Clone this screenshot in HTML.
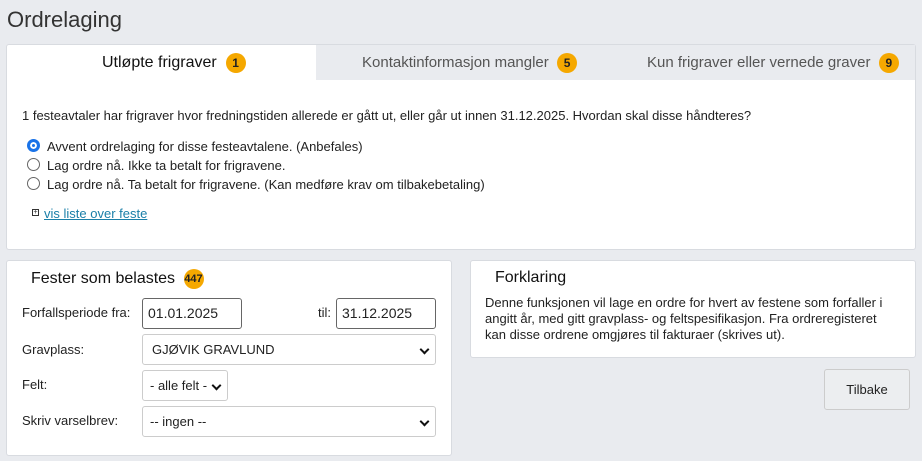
<!DOCTYPE html>
<html><head><meta charset="utf-8"><style>
body{margin:0;width:922px;height:461px;background:#e9ebef;font-family:"Liberation Sans",Arial,sans-serif;color:#222;position:relative;overflow:hidden}
.a{position:absolute;white-space:nowrap}
.panel{position:absolute;background:#fff;border:1px solid #d8dbe0;border-radius:3px}
.badge{display:inline-block;background:#f5a800;border-radius:50%;width:20px;height:20px;text-align:center;line-height:20px;font-size:12px;font-weight:bold;color:#222;vertical-align:middle}
.in{position:absolute;background:#fff;border:1px solid #666;border-radius:3px;font-size:14px;line-height:29px;padding-left:5px;box-sizing:border-box;height:31px}
.sel{position:absolute;background:#fff;border:1px solid #ccc;border-radius:3px;font-size:14px;line-height:29px;padding-left:8px;box-sizing:border-box;height:31px}
.chev{position:absolute;right:7px;top:11px;width:5px;height:5px;border-right:2px solid #111;border-bottom:2px solid #111;transform:rotate(45deg)}
.r{position:absolute;width:11px;height:11px;border:1px solid #666;border-radius:50%;background:#fff}
</style></head><body>
<div class="a" style="left:7px;top:7px;font-size:22px;color:#333">Ordrelaging</div>
<div class="panel" style="left:6px;top:44px;width:908px;height:204px"></div>
<div class="a" style="left:316px;top:45px;width:599px;height:35px;background:#e9ebef"></div>
<div class="a" style="left:102px;top:53px;font-size:16px;color:#111">Utløpte frigraver &nbsp;<span class="badge">1</span></div>
<div class="a" style="left:362px;top:53px;font-size:15px;color:#555">Kontaktinformasjon mangler &nbsp;<span class="badge">5</span></div>
<div class="a" style="left:647px;top:53px;font-size:15px;color:#555">Kun frigraver eller vernede graver &nbsp;<span class="badge">9</span></div>
<div class="a" style="left:22px;top:108px;font-size:13px">1 festeavtaler har frigraver hvor fredningstiden allerede er gått ut, eller går ut innen 31.12.2025. Hvordan skal disse håndteres?</div>
<div class="r" style="left:27px;top:139px;border:3px solid #1a73e8;width:7px;height:7px;box-shadow:inset 0 0 0 2px #fff;background:#1a73e8"></div>
<div class="r" style="left:27px;top:158px"></div>
<div class="r" style="left:27px;top:177px"></div>
<div class="a" style="left:47px;top:139px;font-size:13px">Avvent ordrelaging for disse festeavtalene. (Anbefales)</div>
<div class="a" style="left:47px;top:158px;font-size:13px">Lag ordre nå. Ikke ta betalt for frigravene.</div>
<div class="a" style="left:47px;top:177px;font-size:13px">Lag ordre nå. Ta betalt for frigravene. (Kan medføre krav om tilbakebetaling)</div>
<div class="a" style="left:32px;top:209px;width:5px;height:5px;border:1px solid #333;font-size:7px;line-height:5px;text-align:center">+</div>
<div class="a" style="left:44px;top:206px;font-size:13px;color:#1a7fa8;text-decoration:underline">vis liste over feste</div>

<div class="panel" style="left:6px;top:260px;width:444px;height:194px"></div>
<div class="a" style="left:31px;top:269px;font-size:16px;color:#111">Fester som belastes <span class="badge" style="font-size:11px;margin-left:4px">447</span></div>
<div class="a" style="left:22px;top:305px;font-size:13px">Forfallsperiode fra:</div>
<div class="in" style="left:142px;top:298px;width:100px">01.01.2025</div>
<div class="a" style="left:318px;top:305px;font-size:13px">til:</div>
<div class="in" style="left:336px;top:298px;width:100px">31.12.2025</div>
<div class="a" style="left:22px;top:342px;font-size:13px">Gravplass:</div>
<div class="sel" style="left:142px;top:334px;width:294px;font-size:13px;padding-left:9px">GJØVIK GRAVLUND<div class="chev"></div></div>
<div class="a" style="left:22px;top:377px;font-size:13px">Felt:</div>
<div class="sel" style="left:142px;top:370px;width:86px;padding-left:7px;font-size:13px">- alle felt -<div class="chev"></div></div>
<div class="a" style="left:22px;top:413px;font-size:13px">Skriv varselbrev:</div>
<div class="sel" style="left:142px;top:406px;width:294px;padding-left:7px;font-size:13px">-- ingen --<div class="chev"></div></div>

<div class="panel" style="left:470px;top:260px;width:444px;height:96px"></div>
<div class="a" style="left:495px;top:269px;font-size:16px;color:#111">Forklaring</div>
<div class="a" style="left:485px;top:295px;font-size:13px;line-height:16px;white-space:normal;width:408px">Denne funksjonen vil lage en ordre for hvert av festene som forfaller i angitt år, med gitt gravplass- og feltspesifikasjon. Fra ordreregisteret kan disse ordrene omgjøres til fakturaer (skrives ut).</div>
<div class="a" style="left:824px;top:369px;width:84px;height:39px;background:#eceef0;border:1px solid #ccc;border-radius:3px;font-size:13px;line-height:39px;text-align:center">Tilbake</div>
</body></html>
